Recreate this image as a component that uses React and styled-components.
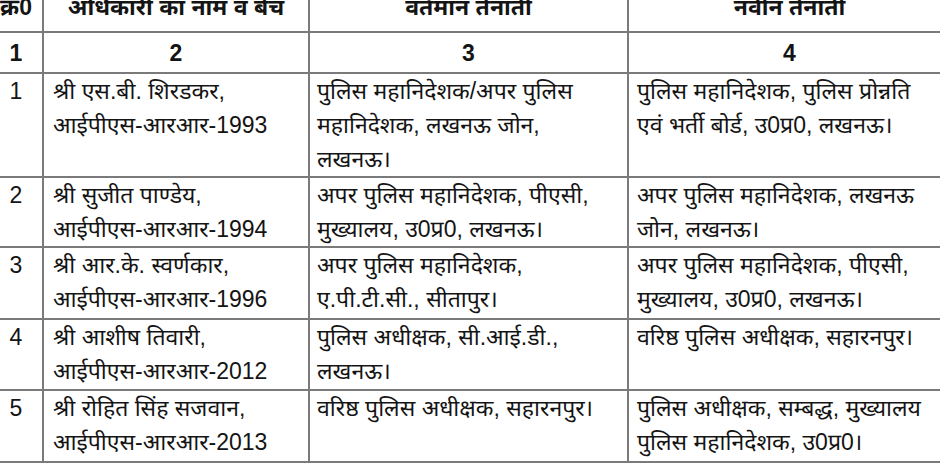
import React from 'react'
import styled, { createGlobalStyle } from 'styled-components'

const GlobalStyle = createGlobalStyle`
  html, body {
    margin: 0;
    padding: 0;
    background: #ffffff;
    overflow: hidden;
  }
`

const Page = styled.div`
  width: 940px;
  height: 468px;
  overflow: hidden;
  background: #ffffff;
`

const Table = styled.table`
  margin: -19px 0 0 -12px;
  width: 962px;
  border-collapse: collapse;
  table-layout: fixed;
  font-family: "Liberation Sans", "Noto Sans Devanagari", "Lohit Devanagari", "Noto Sans", sans-serif;
  font-size: 23px;
  line-height: 34px;
  color: #141414;
`

const Cell = styled.td`
  border: 2px solid #7a7a7a;
  padding: 0 0 0 ${({ $pad }) => $pad || 0}px;
  vertical-align: ${({ $middle }) => ($middle ? 'middle' : 'top')};
  text-align: ${({ $center }) => ($center ? 'center' : 'left')};
  font-weight: ${({ $bold }) => ($bold ? 700 : 400)};
  white-space: nowrap;
`

const Row = styled.tr`
  height: ${({ $h }) => $h}px;
`

const columns = [54, 266, 319, 323]

const rows = [
  {
    no: '1',
    name: ['श्री एस.बी. शिरडकर,', 'आईपीएस-आरआर-1993'],
    current: ['पुलिस महानिदेशक/अपर पुलिस', 'महानिदेशक, लखनऊ जोन,', 'लखनऊ।'],
    next: ['पुलिस महानिदेशक, पुलिस प्रोन्नति', 'एवं भर्ती बोर्ड, उ0प्र0, लखनऊ।'],
    h: 104
  },
  {
    no: '2',
    name: ['श्री सुजीत पाण्डेय,', 'आईपीएस-आरआर-1994'],
    current: ['अपर पुलिस महानिदेशक, पीएसी,', 'मुख्यालय, उ0प्र0, लखनऊ।'],
    next: ['अपर पुलिस महानिदेशक, लखनऊ', 'जोन, लखनऊ।'],
    h: 70
  },
  {
    no: '3',
    name: ['श्री आर.के. स्वर्णकार,', 'आईपीएस-आरआर-1996'],
    current: ['अपर पुलिस महानिदेशक,', 'ए.पी.टी.सी., सीतापुर।'],
    next: ['अपर पुलिस महानिदेशक, पीएसी,', 'मुख्यालय, उ0प्र0, लखनऊ।'],
    h: 72
  },
  {
    no: '4',
    name: ['श्री आशीष तिवारी,', 'आईपीएस-आरआर-2012'],
    current: ['पुलिस अधीक्षक, सी.आई.डी.,', 'लखनऊ।'],
    next: ['वरिष्ठ पुलिस अधीक्षक, सहारनपुर।'],
    h: 71
  },
  {
    no: '5',
    name: ['श्री रोहित सिंह सजवान,', 'आईपीएस-आरआर-2013'],
    current: ['वरिष्ठ पुलिस अधीक्षक, सहारनपुर।'],
    next: ['पुलिस अधीक्षक, सम्बद्ध, मुख्यालय', 'पुलिस महानिदेशक, उ0प्र0।'],
    h: 72
  }
]

const Lines = ({ items }) =>
  items.map((line, i) => <div key={i}>{line}</div>)

const App = () => (
  <Page>
    <GlobalStyle />
    <Table>
      <colgroup>
        {columns.map((w, i) => <col key={i} style={{ width: w }} />)}
      </colgroup>
      <tbody>
        <Row $h={50}>
          <Cell $center $bold $middle>क्र0</Cell>
          <Cell $center $bold $middle>अधिकारी का नाम व बैच</Cell>
          <Cell $center $bold $middle>वर्तमान तैनाती</Cell>
          <Cell $center $bold $middle>नवीन तैनाती</Cell>
        </Row>
        <Row $h={41}>
          {['1', '2', '3', '4'].map(n => (
            <Cell key={n} $center $bold $middle>{n}</Cell>
          ))}
        </Row>
        {rows.map(row => (
          <Row key={row.no} $h={row.h}>
            <Cell $center>{row.no}</Cell>
            <Cell $pad={9}><Lines items={row.name} /></Cell>
            <Cell $pad={7}><Lines items={row.current} /></Cell>
            <Cell $pad={8}><Lines items={row.next} /></Cell>
          </Row>
        ))}
      </tbody>
    </Table>
  </Page>
)

export default App
